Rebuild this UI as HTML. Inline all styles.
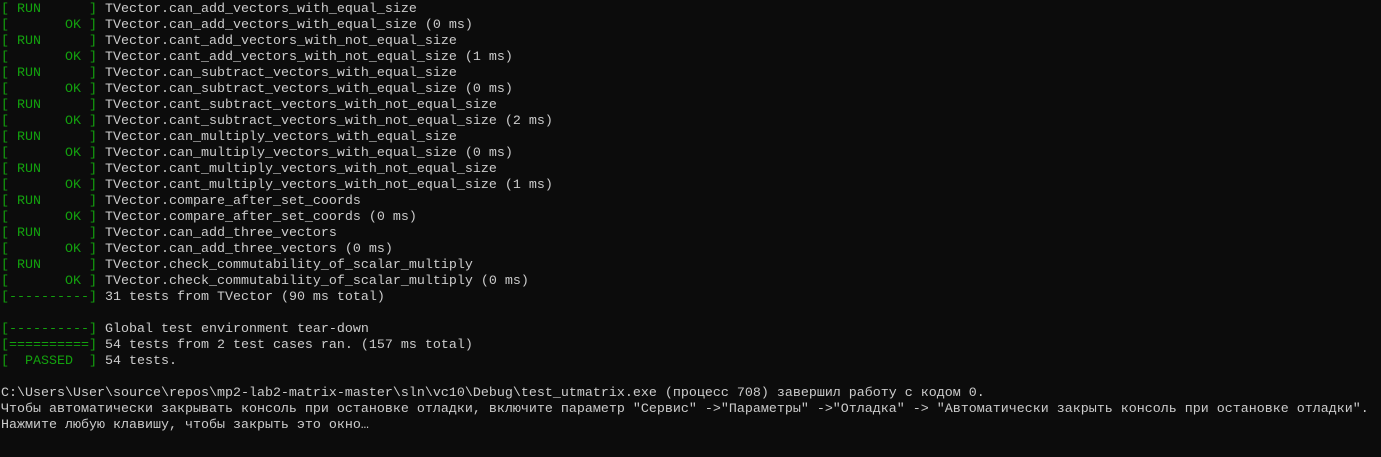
<!DOCTYPE html><html><head><meta charset="utf-8"><style>
html,body{margin:0;background:#0c0c0c;width:1381px;height:457px;overflow:hidden}
pre{margin:0;padding:2px 0 0 1px;font-family:"Liberation Mono","DejaVu Sans Mono",monospace;font-size:13.33px;line-height:16px;color:#cccccc;white-space:pre}
.g{color:#13a10e}
</style></head><body><pre><span class="g">[ RUN      ]</span> TVector.can_add_vectors_with_equal_size
<span class="g">[       OK ]</span> TVector.can_add_vectors_with_equal_size (0 ms)
<span class="g">[ RUN      ]</span> TVector.cant_add_vectors_with_not_equal_size
<span class="g">[       OK ]</span> TVector.cant_add_vectors_with_not_equal_size (1 ms)
<span class="g">[ RUN      ]</span> TVector.can_subtract_vectors_with_equal_size
<span class="g">[       OK ]</span> TVector.can_subtract_vectors_with_equal_size (0 ms)
<span class="g">[ RUN      ]</span> TVector.cant_subtract_vectors_with_not_equal_size
<span class="g">[       OK ]</span> TVector.cant_subtract_vectors_with_not_equal_size (2 ms)
<span class="g">[ RUN      ]</span> TVector.can_multiply_vectors_with_equal_size
<span class="g">[       OK ]</span> TVector.can_multiply_vectors_with_equal_size (0 ms)
<span class="g">[ RUN      ]</span> TVector.cant_multiply_vectors_with_not_equal_size
<span class="g">[       OK ]</span> TVector.cant_multiply_vectors_with_not_equal_size (1 ms)
<span class="g">[ RUN      ]</span> TVector.compare_after_set_coords
<span class="g">[       OK ]</span> TVector.compare_after_set_coords (0 ms)
<span class="g">[ RUN      ]</span> TVector.can_add_three_vectors
<span class="g">[       OK ]</span> TVector.can_add_three_vectors (0 ms)
<span class="g">[ RUN      ]</span> TVector.check_commutability_of_scalar_multiply
<span class="g">[       OK ]</span> TVector.check_commutability_of_scalar_multiply (0 ms)
<span class="g">[----------]</span> 31 tests from TVector (90 ms total)

<span class="g">[----------]</span> Global test environment tear-down
<span class="g">[==========]</span> 54 tests from 2 test cases ran. (157 ms total)
<span class="g">[  PASSED  ]</span> 54 tests.

C:\Users\User\source\repos\mp2-lab2-matrix-master\sln\vc10\Debug\test_utmatrix.exe (процесс 708) завершил работу с кодом 0.
Чтобы автоматически закрывать консоль при остановке отладки, включите параметр "Сервис" -&gt;"Параметры" -&gt;"Отладка" -&gt; "Автоматически закрыть консоль при остановке отладки".
Нажмите любую клавишу, чтобы закрыть это окно…</pre></body></html>
